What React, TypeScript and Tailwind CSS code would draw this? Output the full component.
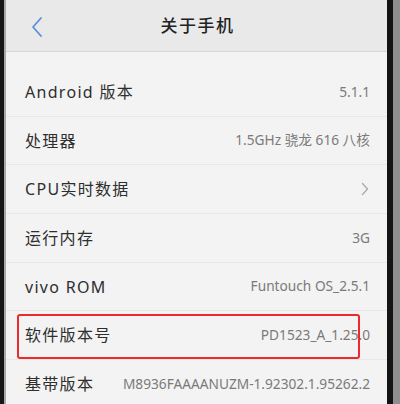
import React from "react";

const rows: { label: string; value?: string; chevron?: boolean; boxed?: boolean }[] = [
  { label: "Android 版本", value: "5.1.1" },
  { label: "处理器", value: "1.5GHz 骁龙 616 八核" },
  { label: "CPU实时数据", chevron: true },
  { label: "运行内存", value: "3G" },
  { label: "vivo ROM", value: "Funtouch OS_2.5.1" },
  { label: "软件版本号", value: "PD1523_A_1.25.0", boxed: true },
  { label: "基带版本", value: "M8936FAAAANUZM-1.92302.1.95262.2" },
];

export default function App() {
  return (
    <div
      className="flex w-[400px] h-[404px] overflow-hidden bg-[#8c8c8c]"
      style={{ fontFamily: '"Noto Sans", "Noto Sans CJK SC", sans-serif' }}
    >
      <div className="w-[4px] h-full bg-[#161616]" />
      <div className="w-[2px] h-full bg-[#a8a8a8]" />
      <div className="flex-1 h-full flex flex-col bg-[#f3f3f3]">
        <div className="h-[52px] shrink-0 bg-[#e9e9e9] border-b border-[#d6d6d6] relative flex items-center justify-center">
          <svg
            className="absolute left-[24px] top-[16px]"
            width="14"
            height="22"
            viewBox="0 0 14 22"
            fill="none"
          >
            <path d="M11 2 L3 11 L11 20" stroke="#5a8fd8" strokeWidth="1.8" strokeLinecap="round" strokeLinejoin="round" />
          </svg>
          <span className="text-[17px] font-medium text-[#222] tracking-[1.5px] ml-[2px]">关于手机</span>
        </div>
        <div className="h-[16px] shrink-0" />
        {rows.map((r) => (
          <div
            key={r.label}
            className="relative h-[48.7px] shrink-0 flex items-center justify-between border-b border-[#e8e8e8] pl-[19px] pr-[17px]"
          >
            <span className="text-[16px] text-[#2e2e2e] tracking-[1.3px] whitespace-nowrap">{r.label}</span>
            {r.value && (
              <span className="text-[13.7px] text-[#7a7a7a] whitespace-nowrap">{r.value}</span>
            )}
            {r.chevron && (
              <svg width="8" height="14" viewBox="0 0 8 14" fill="none" className="mr-[1px]">
                <path d="M1.5 1.5 L6.5 7 L1.5 12.5" stroke="#a8a8a8" strokeWidth="1.2" strokeLinecap="round" strokeLinejoin="round" />
              </svg>
            )}
            {r.boxed && (
              <div className="absolute left-[11px] top-[3px] w-[343px] h-[45px] border-2 border-[#ec2a2c] rounded-[3px]" />
            )}
          </div>
        ))}
      </div>
      <div className="w-[6px] h-full bg-[#141414]" />
      <div className="w-[7px] h-full bg-[#8e8e8e]" />
    </div>
  );
}
